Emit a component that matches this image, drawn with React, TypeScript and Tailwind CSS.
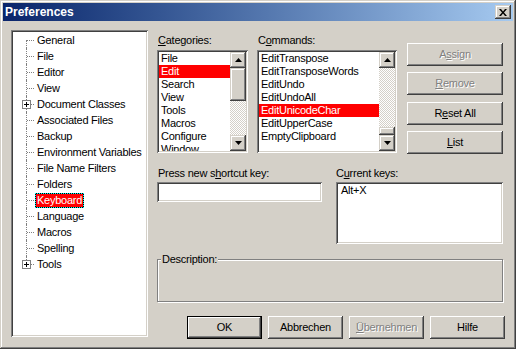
import React from 'react';

const sunken =
  'shadow-[inset_1px_1px_#808080,inset_-1px_-1px_#ffffff,inset_2px_2px_#404040,inset_-2px_-2px_#d4d0c8]';
const raised =
  'shadow-[inset_-1px_-1px_#404040,inset_1px_1px_#ffffff,inset_-2px_-2px_#808080,inset_2px_2px_#d4d0c8]';
const scrollRaised =
  'shadow-[inset_-1px_-1px_#404040,inset_1px_1px_#d4d0c8,inset_-2px_-2px_#808080,inset_2px_2px_#ffffff]';
const checker =
  'bg-[repeating-conic-gradient(#d4d0c8_0_25%,#ffffff_0_50%)] [background-size:2px_2px]';

const treeItems = [
  { label: 'General' },
  { label: 'File' },
  { label: 'Editor' },
  { label: 'View' },
  { label: 'Document Classes', plus: true },
  { label: 'Associated Files' },
  { label: 'Backup' },
  { label: 'Environment Variables' },
  { label: 'File Name Filters' },
  { label: 'Folders' },
  { label: 'Keyboard', selected: true },
  { label: 'Language' },
  { label: 'Macros' },
  { label: 'Spelling' },
  { label: 'Tools', plus: true },
];

const categories = ['File', 'Edit', 'Search', 'View', 'Tools', 'Macros', 'Configure', 'Window'];
const commands = [
  'EditTranspose',
  'EditTransposeWords',
  'EditUndo',
  'EditUndoAll',
  'EditUnicodeChar',
  'EditUpperCase',
  'EmptyClipboard',
];

function Arrow({ down }: { down?: boolean }) {
  return (
    <svg width="7" height="4" viewBox="0 0 7 4" className="block">
      {down ? <path d="M0 0h7L3.5 4z" fill="#000" /> : <path d="M3.5 0L7 4H0z" fill="#000" />}
    </svg>
  );
}

function ScrollBar({ thumbFirst }: { thumbFirst?: boolean }) {
  return (
    <div className="w-[16px] h-full flex flex-col shrink-0">
      <div className={`h-[16px] bg-[#d4d0c8] flex items-center justify-center ${scrollRaised}`}>
        <Arrow />
      </div>
      {thumbFirst ? (
        <>
          <div className={`h-[33px] bg-[#d4d0c8] ${scrollRaised}`} />
          <div className={`flex-1 ${checker}`} />
        </>
      ) : (
        <>
          <div className={`flex-1 ${checker}`} />
          <div className={`h-[8px] bg-[#d4d0c8] ${scrollRaised}`} />
        </>
      )}
      <div className={`h-[16px] bg-[#d4d0c8] flex items-center justify-center ${scrollRaised}`}>
        <Arrow down />
      </div>
    </div>
  );
}

function ListBox({ items, selected, thumbFirst, className }: { items: string[]; selected: number; thumbFirst?: boolean; className: string }) {
  return (
    <div className={`h-[103px] p-[2px] bg-white flex ${sunken} ${className}`}>
      <div className="flex-1 overflow-hidden">
        {items.map((item, i) => (
          <div
            key={item}
            className={`h-[13px] leading-[13px] pl-[2px] whitespace-nowrap ${i === selected ? 'bg-[#ff0000] text-white' : 'text-black'}`}
          >
            {item}
          </div>
        ))}
      </div>
      <ScrollBar thumbFirst={thumbFirst} />
    </div>
  );
}

function Btn({
  children,
  className,
  disabled,
  isDefault,
}: {
  children: React.ReactNode;
  className: string;
  disabled?: boolean;
  isDefault?: boolean;
}) {
  return (
    <div
      className={`h-[23px] bg-[#d4d0c8] flex items-center justify-center ${raised} ${isDefault ? 'border border-black' : ''} ${
        disabled ? 'text-[#808080] [text-shadow:1px_1px_#ffffff]' : 'text-black'
      } ${className}`}
    >
      <span>{children}</span>
    </div>
  );
}

function TreeRow({ label, plus, selected, first, last }: { label: string; plus?: boolean; selected?: boolean; first: boolean; last: boolean }) {
  return (
    <div className="h-[16px] flex items-center">
      <div className="relative w-[22px] h-[16px] shrink-0">
        <div
          className={`absolute left-[13px] w-0 border-l border-dotted border-[#808080] ${first ? 'top-[8px] bottom-0' : last ? 'top-0 h-[8px]' : 'top-0 bottom-0'}`}
        />
        <div className="absolute left-[14px] top-[8px] w-[7px] h-0 border-t border-dotted border-[#808080]" />
        {plus && (
          <div className="absolute left-[9px] top-[4px] w-[9px] h-[9px] border border-[#808080] bg-white">
            <div className="absolute left-[1px] top-[3px] w-[5px] h-px bg-black" />
            <div className="absolute left-[3px] top-[1px] w-px h-[5px] bg-black" />
          </div>
        )}
      </div>
      {selected ? (
        <span className="bg-black flex">
          <span className="h-[15px] leading-[13px] px-px border border-dotted border-[#00ffff] bg-[#ff0000] bg-clip-padding text-white">
            {label}
          </span>
        </span>
      ) : (
        <span className="h-[15px] leading-[15px] px-[2px] whitespace-nowrap">{label}</span>
      )}
    </div>
  );
}

export default function App() {
  return (
    <div className="w-[516px] h-[349px] bg-[#d4d0c8] p-[3px] flex flex-col font-['Liberation_Sans',Arial,sans-serif] text-[11px] tracking-[-0.25px] text-black shadow-[inset_-1px_-1px_#404040,inset_1px_1px_#d4d0c8,inset_-2px_-2px_#808080,inset_2px_2px_#ffffff] select-none">
      {/* title bar */}
      <div className="h-[18px] shrink-0 bg-linear-to-r from-[#0a246a] to-[#a6caf0] flex items-center justify-between pl-[2px] pr-[2px]">
        <span className="text-white font-bold text-[12px] tracking-normal leading-[18px]">Preferences</span>
        <div className={`w-[16px] h-[14px] bg-[#d4d0c8] flex items-center justify-center ${scrollRaised}`}>
          <svg width="8" height="7" viewBox="0 0 8 7" className="block">
            <path d="M0 0h2l2 2.5L6 0h2L5 3.5 8 7H6L4 4.5 2 7H0l3-3.5z" fill="#000" />
          </svg>
        </div>
      </div>

      <div className="flex pl-[8px] pt-[9px]">
        {/* tree */}
        <div className={`w-[137px] h-[307px] bg-white p-[2px] shrink-0 ${sunken}`}>
          {treeItems.map((t, i) => (
            <TreeRow key={t.label} {...t} first={i === 0} last={i === treeItems.length - 1} />
          ))}
        </div>

        {/* right side */}
        <div className="ml-[9px] w-[348px] flex flex-col">
          <div className="flex">
            <div className="w-[91px] flex flex-col">
              <div className="mt-[4px] h-[13px] leading-[13px] pl-px">
                <u>C</u>ategories:
              </div>
              <ListBox items={categories} selected={1} thumbFirst className="mt-[3px] w-[91px]" />
            </div>
            <div className="ml-[9px] w-[140px] flex flex-col">
              <div className="mt-[4px] h-[13px] leading-[13px] pl-px">
                C<u>o</u>mmands:
              </div>
              <ListBox items={commands} selected={4} className="mt-[3px] w-[140px]" />
            </div>
            <div className="ml-[10px] w-[96px] flex flex-col mt-[13px]">
              <Btn className="w-[96px]" disabled>
                A<u>s</u>sign
              </Btn>
              <Btn className="w-[96px] mt-[6px]" disabled>
                <u>R</u>emove
              </Btn>
              <Btn className="w-[96px] mt-[7px]">
                R<u>e</u>set All
              </Btn>
              <Btn className="w-[96px] mt-[6px]">
                <u>L</u>ist
              </Btn>
            </div>
          </div>

          <div className="mt-[13px] w-[346px] flex justify-between">
            <div className="w-[165px] flex flex-col">
              <div className="h-[13px] leading-[13px] pl-px">
                Press new s<u>h</u>ortcut key:
              </div>
              <div className={`mt-[2px] h-[20px] bg-white ${sunken}`} />
            </div>
            <div className="w-[167px] flex flex-col">
              <div className="h-[13px] leading-[13px]">
                C<u>u</u>rrent keys:
              </div>
              <div className={`mt-[2px] h-[62px] bg-white p-[2px] pl-[5px] ${sunken}`}>
                <div className="h-[13px] leading-[13px]">Alt+X</div>
              </div>
            </div>
          </div>

          <div className="relative mt-[15px] w-[346px] h-[43px] border border-[#808080] shadow-[inset_1px_1px_#ffffff,1px_1px_#ffffff]">
            <span className="absolute -top-[7px] left-[3px] px-px bg-[#d4d0c8] leading-[13px]">Description:</span>
          </div>

          <div className="mt-[14px] flex justify-end gap-[6px]">
            <Btn className="w-[75px]" isDefault>
              OK
            </Btn>
            <Btn className="w-[75px]">Abbrechen</Btn>
            <Btn className="w-[75px]" disabled>
              <u>Ü</u>bernehmen
            </Btn>
            <Btn className="w-[75px]">Hilfe</Btn>
          </div>
        </div>
      </div>
    </div>
  );
}
